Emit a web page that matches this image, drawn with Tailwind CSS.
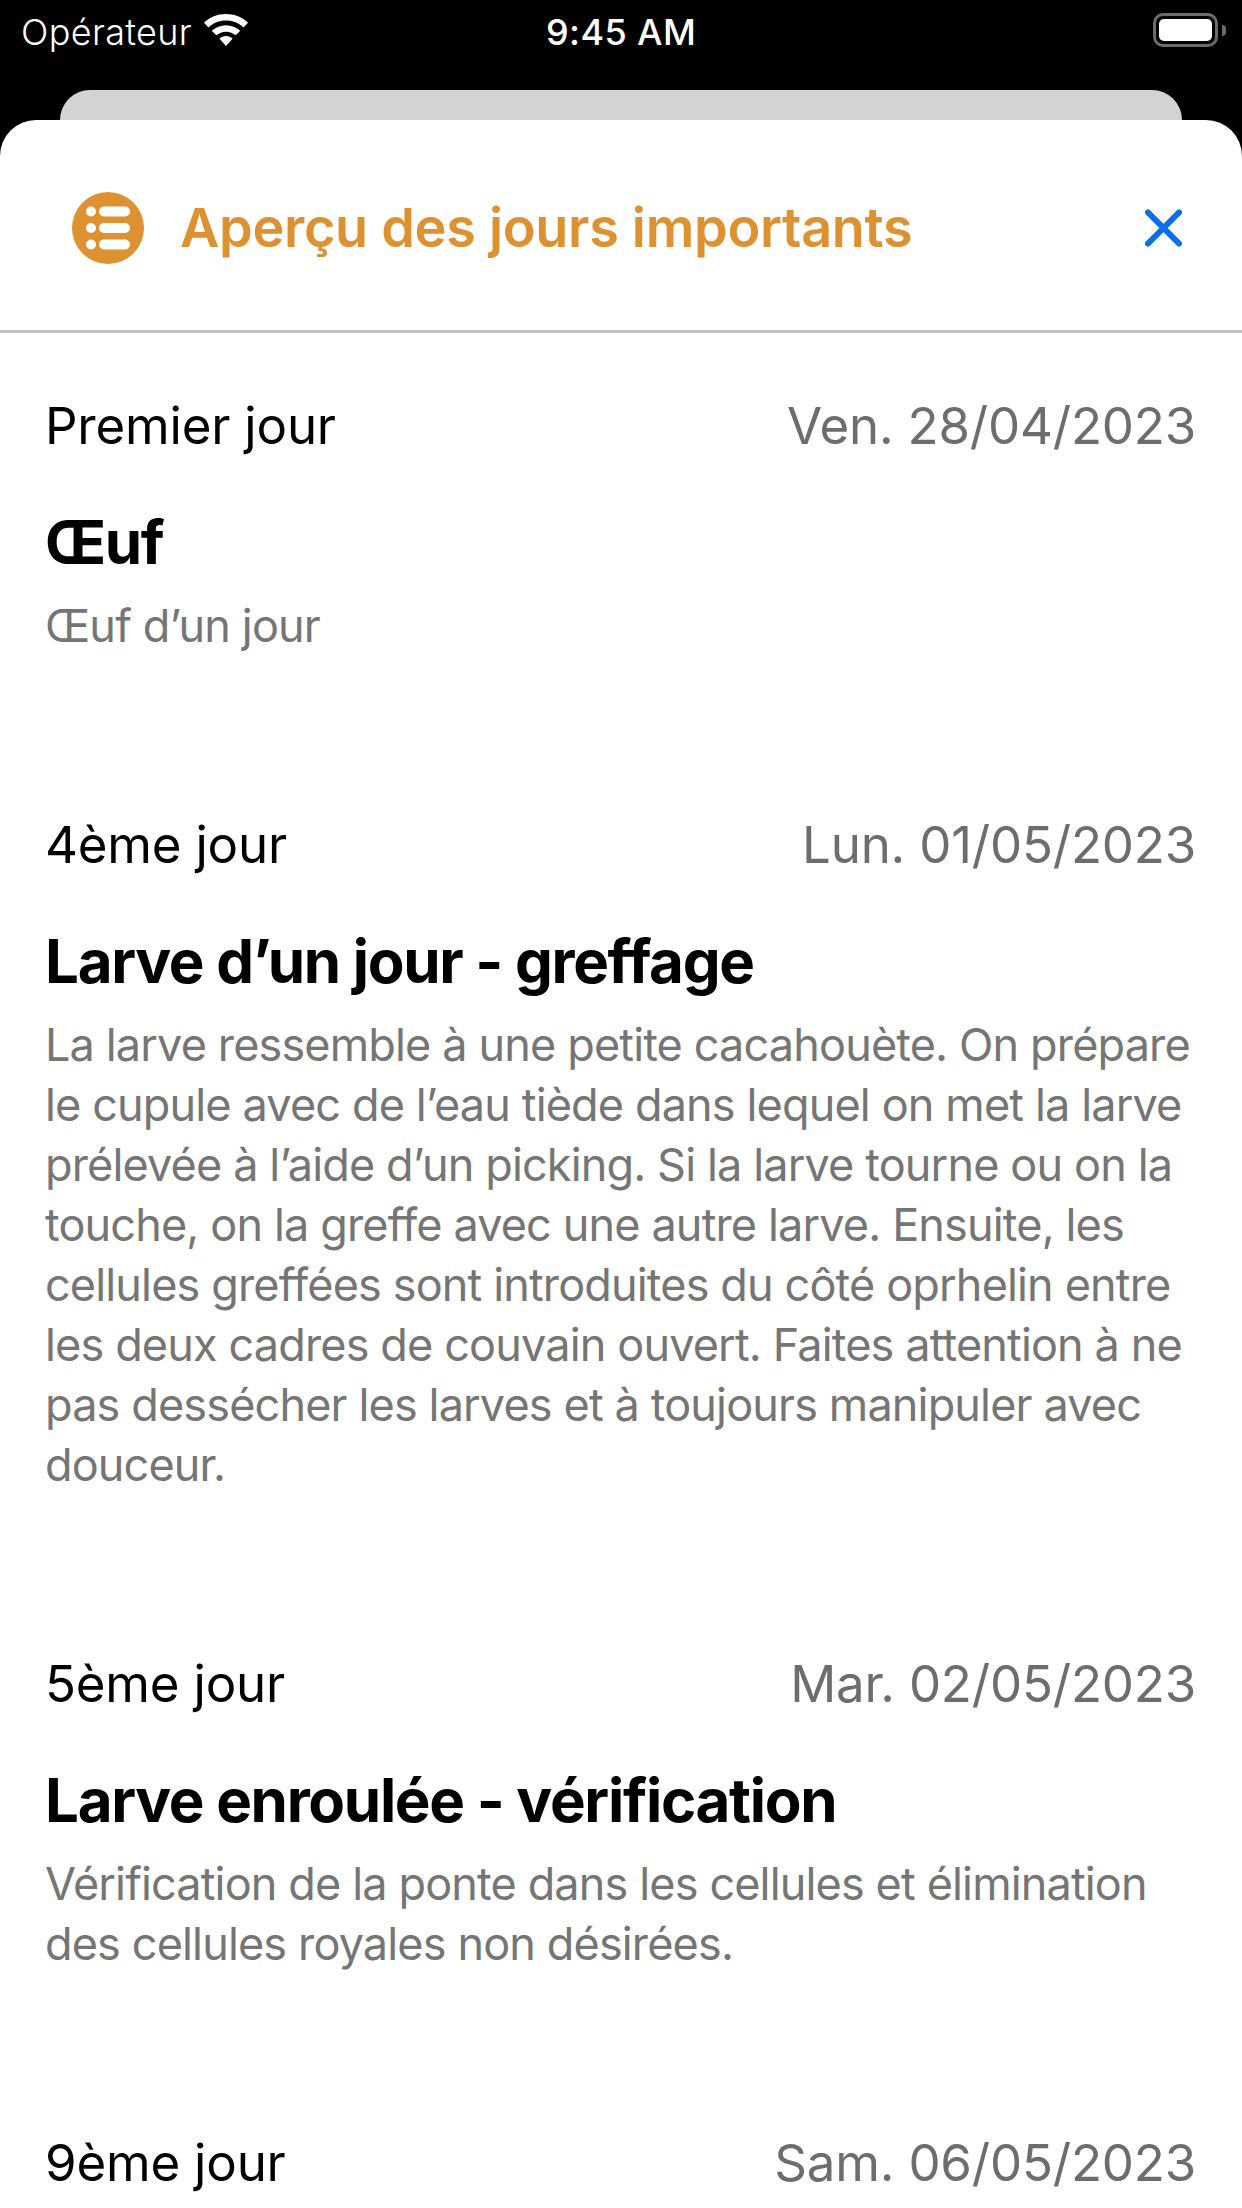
<!DOCTYPE html>
<html lang="fr">
  <head>
    <meta charset="UTF-8" />
    <title>Aperçu des jours importants</title>
    <script src="https://cdn.jsdelivr.net/npm/@tailwindcss/browser@4"></script>
  </head>
  <body class="bg-black font-['Inter','Roboto',sans-serif]">
    <div class="w-[1242px] h-[2208px] overflow-hidden flex flex-col bg-black">
      <!-- status bar -->
      <header class="h-[90px] shrink-0 relative flex items-start justify-between pl-[21px] pr-[16px] pt-[11px] text-white">
        <div class="flex items-start gap-[11px]">
          <span class="text-[36px] leading-[42px] font-light tracking-[0.35px]">Opérateur</span>
          <svg class="w-[46px] h-[32px] mt-[3px]" viewBox="0 0 46 33" fill="#fff">
            <path d="M23 0C14.200 0 6.200 3.400 0.300 9L5 13.800C9.700 9.400 16 6.800 23 6.800S36.300 9.400 41 13.800L45.700 9C39.800 3.400 31.800 0 23 0Z" />
            <path d="M23 11.500C17.400 11.500 12.200 13.700 8.300 17.200L13 22C15.700 19.600 19.200 18.200 23 18.200S30.300 19.600 33 22L37.700 17.200C33.800 13.700 28.600 11.500 23 11.500Z" />
            <path d="M23 22.800C20.400 22.800 18 23.800 16.300 25.400L23 33L29.700 25.400C28 23.800 25.600 22.800 23 22.800Z" />
          </svg>
        </div>
        <span class="absolute left-[546px] top-[11px] text-[36px] leading-[42px] font-medium tracking-[0.4px]">9:45 AM</span>
        <div class="flex items-center mt-[2px]">
          <div class="w-[65px] h-[34px] rounded-[10px] border-[3px] border-[#6b6b6b] p-[3px]">
            <div class="w-full h-full bg-white rounded-[5px]"></div>
          </div>
          <div class="w-[4px] h-[11px] ml-[4px] bg-[#6b6b6b] rounded-r-full"></div>
        </div>
      </header>

      <!-- sheet stacked behind -->
      <div class="h-[30px] shrink-0 mx-[60px] bg-[#d1d3d5] rounded-t-[30px]"></div>

      <!-- front sheet -->
      <main class="flex-1 bg-white rounded-t-[36px]">
        <div class="h-[213px] flex items-center justify-between pt-[6px] pl-[72px] pr-[60px] border-b-[3px] border-[#c2c2c2]">
          <div class="flex items-center gap-[36px]">
            <svg class="w-[72px] h-[72px]" viewBox="0 0 72 72">
              <circle cx="36" cy="36" r="36" fill="#dd9130" />
              <g fill="#fff">
                <circle cx="19" cy="19.500" r="5" />
                <circle cx="19" cy="36" r="5" />
                <circle cx="19" cy="52.500" r="5" />
                <rect x="27" y="14.500" width="31" height="10" rx="5" />
                <rect x="27" y="31" width="31" height="10" rx="5" />
                <rect x="27" y="47.500" width="31" height="10" rx="5" />
              </g>
            </svg>
            <h1 class="text-[54px] leading-[60px] font-semibold tracking-[-0.3px] text-[#dd9130]">Aperçu des jours importants</h1>
          </div>
          <svg class="w-[37px] h-[38px]" viewBox="0 0 38 38" fill="none" stroke="#0a6fe8" stroke-width="6" stroke-linecap="round">
            <path d="M3 3L35 35M35 3L3 35" />
          </svg>
        </div>

        <div class="pl-[45px] pr-[46px] pt-[63px] flex flex-col gap-[159px]">
          <section>
            <div class="flex justify-between text-[51px] leading-[60px] tracking-[-0.2px]">
              <span class="text-black">Premier jour</span>
              <span class="text-[#6d6d6d]">Ven. 28/04/2023</span>
            </div>
            <h2 class="mt-[50px] text-[60px] leading-[72px] font-bold tracking-[-1.3px] text-black">Œuf</h2>
            <p class="mt-[18px] text-[45px] leading-[60px] tracking-[-0.85px] text-[#757575]">Œuf d’un jour</p>
          </section>
          <section>
            <div class="flex justify-between text-[51px] leading-[60px] tracking-[-0.2px]">
              <span class="text-black">4ème jour</span>
              <span class="text-[#6d6d6d]">Lun. 01/05/2023</span>
            </div>
            <h2 class="mt-[50px] text-[60px] leading-[72px] font-bold tracking-[-1.3px] text-black">Larve d’un jour - greffage</h2>
            <p class="mt-[18px] text-[45px] leading-[60px] tracking-[-0.85px] whitespace-nowrap text-[#757575]">La larve ressemble à une petite cacahouète. On prépare<br />le cupule avec de l’eau tiède dans lequel on met la larve<br />prélevée à l’aide d’un picking. Si la larve tourne ou on la<br />touche, on la greffe avec une autre larve. Ensuite, les<br />cellules greffées sont introduites du côté oprhelin entre<br />les deux cadres de couvain ouvert. Faites attention à ne<br />pas dessécher les larves et à toujours manipuler avec<br />douceur.</p>
          </section>
          <section>
            <div class="flex justify-between text-[51px] leading-[60px] tracking-[-0.2px]">
              <span class="text-black">5ème jour</span>
              <span class="text-[#6d6d6d]">Mar. 02/05/2023</span>
            </div>
            <h2 class="mt-[50px] text-[60px] leading-[72px] font-bold tracking-[-1.3px] text-black">Larve enroulée - vérification</h2>
            <p class="mt-[18px] text-[45px] leading-[60px] tracking-[-0.85px] whitespace-nowrap text-[#757575]">Vérification de la ponte dans les cellules et élimination<br />des cellules royales non désirées.</p>
          </section>
          <section>
            <div class="flex justify-between text-[51px] leading-[60px] tracking-[-0.2px]">
              <span class="text-black">9ème jour</span>
              <span class="text-[#6d6d6d]">Sam. 06/05/2023</span>
            </div>
          </section>
        </div>
      </main>
    </div>
  </body>
</html>
